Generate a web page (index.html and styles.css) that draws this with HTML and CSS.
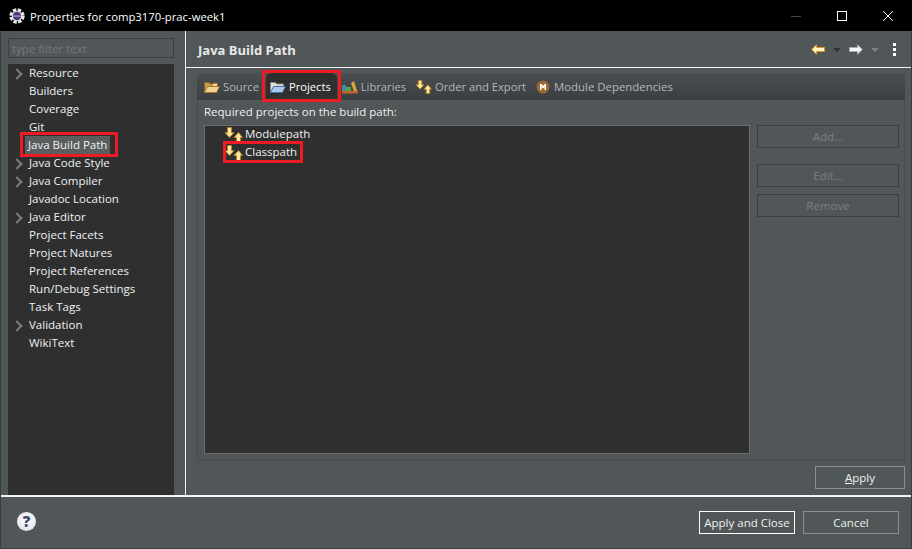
FILE: index.html
```html
<!DOCTYPE html>
<html lang="en">

<head>
  <meta charset="UTF-8" />
  <title>Properties for comp3170-prac-week1</title>
  <link rel="stylesheet" href="styles.css">
</head>

<body>
  <svg class="defs" width="0" height="0">
    <defs>
      <symbol id="arrows" viewBox="0 0 18 16">
        <path d="M2.500 .5h4v5h2.500l-4.500 5-4.500-5h2.500z" fill="#fbe6a8" stroke="#b8801c" />
        <path d="M11.500 15.500v-5H9l4.500-5 4 5h-2v5z" fill="#fbe6a8" stroke="#b8801c" />
      </symbol>
      <symbol id="folder" viewBox="0 0 16 14">
        <path d="M.5 12.500v-10h5l1 1.500h2l1-1h4v4" fill="#c99a52" stroke="#8a6228" />
        <path d="M9 4h4v3H9z" fill="#f0dca8" />
        <path d="M.5 12.500l3-6h12l-3 6z" fill="#f2d592" stroke="#a9762c" />
      </symbol>
      <symbol id="folder-open" viewBox="0 0 16 14">
        <path d="M.5 12.500v-10h5l1 1.500h7v3" fill="#e8e4d4" stroke="#8a8a80" />
        <path d="M.5 12.500l3-6h12l-3 6z" fill="#a9c8ea" stroke="#3f6ea8" />
      </symbol>
    </defs>
  </svg>

  <div class="window">
    <div class="titlebar">
      <svg class="app-icon" width="16" height="16" viewBox="0 0 16 16">
        <circle cx="8" cy="8" r="6.200" fill="none" stroke="#e8e6ee" stroke-width="3" stroke-dasharray="3.400 1.470" />
        <circle cx="8" cy="8" r="5.300" fill="#e8e6ee" />
        <circle cx="8" cy="8" r="4.200" fill="#4b3a78" />
        <path d="M3.800 7.500h8.400v1.200H3.800z" fill="#a9a0c8" />
      </svg>
      <span class="title">Properties for comp3170-prac-week1</span>
      <div class="win-controls">
        <span class="win-btn"><svg width="10" height="10"><path d="M0 5.500h10" stroke="#444" /></svg></span>
        <span class="win-btn"><svg width="10" height="10"><rect x=".5" y=".5" width="9" height="9" fill="none" stroke="#fff" /></svg></span>
        <span class="win-btn"><svg width="10" height="10"><path d="M0 0l10 10M10 0L0 10" stroke="#fff" /></svg></span>
      </div>
    </div>

    <div class="main">
      <aside class="sidebar">
        <input class="filter" type="text" placeholder="type filter text" />
        <ul class="nav">
          <li class="has-kids">Resource</li>
          <li>Builders</li>
          <li>Coverage</li>
          <li>Git</li>
          <li class="selected"><span>Java Build Path</span></li>
          <li class="has-kids">Java Code Style</li>
          <li class="has-kids">Java Compiler</li>
          <li>Javadoc Location</li>
          <li class="has-kids">Java Editor</li>
          <li>Project Facets</li>
          <li>Project Natures</li>
          <li>Project References</li>
          <li>Run/Debug Settings</li>
          <li>Task Tags</li>
          <li class="has-kids">Validation</li>
          <li>WikiText</li>
        </ul>
      </aside>

      <section class="content">
        <header class="page-head">
          <h1>Java Build Path</h1>
          <div class="head-tools">
            <svg width="14" height="11" viewBox="0 0 14 11"><path d="M.8 5.500L5.500.7v2.800h8v4h-8v2.800z" fill="#fff3c4" stroke="#e09a1e" /></svg>
            <i class="caret"></i>
            <svg width="14" height="11" viewBox="0 0 14 11"><path d="M13.200 5.500L8.500.7v2.800h-8v4h8v2.800z" fill="#f6f6f6" stroke="#a8acae" /></svg>
            <i class="caret off"></i>
            <span class="dots"><b></b><b></b><b></b></span>
          </div>
        </header>

        <div class="page-body">
          <div class="tab-panel">
            <div class="tabs">
              <div class="tab">
                <svg width="16" height="14"><use href="#folder" /></svg>Source
              </div>
              <div class="tab active">
                <svg width="16" height="14"><use href="#folder-open" /></svg>Projects
              </div>
              <div class="tab">
                <svg width="16" height="14" viewBox="0 0 16 14">
                  <path d="M0 5h4v7H0z" fill="#3c8f9a" />
                  <path d="M4 7h5v5H4z" fill="#5aa04a" />
                  <path d="M9 3l3-2 3.500 11H12z" fill="#d8a23a" />
                  <path d="M0 11h16v2.500H0z" fill="#c0622a" />
                </svg>Libraries
              </div>
              <div class="tab">
                <svg width="16" height="14"><use href="#arrows" /></svg>Order and Export
              </div>
              <div class="tab module">
                <svg width="14" height="14" viewBox="0 0 14 14">
                  <circle cx="7" cy="7" r="6.500" fill="#9a6a32" />
                  <path d="M4 10V4h1.500L7 6l1.500-2H10v6H8.500V7L7 8.500 5.500 7v3z" fill="#fff" />
                </svg>Module Dependencies
              </div>
            </div>

            <p class="req-label">Required projects on the build path:</p>

            <div class="req-row">
              <ul class="req-tree">
                <li><svg width="18" height="16"><use href="#arrows" /></svg>Modulepath</li>
                <li class="marked"><svg width="18" height="16"><use href="#arrows" /></svg>Classpath</li>
              </ul>
              <div class="side-btns">
                <button disabled>Add...</button>
                <button class="gap" disabled>Edit...</button>
                <button disabled>Remove</button>
              </div>
            </div>
          </div>

          <div class="apply-row">
            <button class="btn"><u>A</u>pply</button>
          </div>
        </div>
      </section>
    </div>

    <footer class="footer">
      <span class="help">?</span>
      <div class="footer-btns">
        <button class="btn primary">Apply and Close</button>
        <button class="btn">Cancel</button>
      </div>
    </footer>
  </div>
</body>

</html>
```

FILE: styles.css
```css
* {
  box-sizing: border-box;
  margin: 0;
  padding: 0;
}

body {
  width: 912px;
  height: 549px;
  overflow: hidden;
  background: #3a3d3f;
  color: #eef1f2;
  font-family: "Open Sans", "Noto Sans", sans-serif;
  font-size: 11.5px;
}

.defs {
  display: block;
  height: 0;
}

button,
input {
  font: inherit;
}

.window {
  display: flex;
  flex-direction: column;
  height: 548px;
  margin: 0 1px;
  background: #515658;
}

.titlebar {
  display: flex;
  align-items: center;
  flex: 0 0 31px;
  margin: 0 -1px;
  padding: 0 1px 0 9px;
  background: #000;
  color: #fff;
}

.app-icon {
  margin-right: 5px;
}

.title {
  flex: 1;
  padding-top: 1px;
  font-size: 11.300px;
}

.win-controls {
  display: flex;
}

.win-btn {
  display: flex;
  justify-content: center;
  align-items: center;
  width: 46px;
  height: 31px;
}

.main {
  display: flex;
  flex: 0 0 466px;
  border-bottom: 2px solid #f2f2f2;
}

.sidebar {
  display: flex;
  flex-direction: column;
  flex: 0 0 185px;
  padding: 7px 11px 0 7px;
  border-right: 1px solid #f2f2f2;
}

.filter {
  height: 20px;
  padding: 0 3px;
  border: 1px solid #3c3f41;
  background: #515658;
  color: #fff;
}

.filter::placeholder {
  color: #747879;
  opacity: 1;
}

.nav {
  flex: 1;
  margin-top: 6px;
  list-style: none;
  background: #2f2f2f;
}

.nav li {
  position: relative;
  height: 18px;
  padding-left: 21px;
  line-height: 18px;
}

.has-kids::before {
  content: "";
  position: absolute;
  left: 5px;
  top: 6px;
  width: 6px;
  height: 6px;
  border-top: 2px solid #7a7c7e;
  border-right: 2px solid #7a7c7e;
  transform: rotate(45deg);
}

.nav .selected {
  padding-left: 17px;
}

.selected span {
  position: relative;
  display: inline-block;
  padding: 0 3px;
  background: #5a5e5e;
}

/* red annotation boxes from the screenshot */
.selected span::after,
.tab.active::after,
.marked::after {
  content: "";
  position: absolute;
  border: 3px solid #ed1c24;
}

.selected span::after {
  left: -5px;
  right: -8px;
  top: -4px;
  bottom: -3px;
}

.content {
  display: flex;
  flex-direction: column;
  flex: 1;
}

.page-head {
  display: flex;
  justify-content: space-between;
  align-items: center;
  flex: 0 0 37px;
  padding: 1px 15px 0 12px;
  border-bottom: 1px solid #f2f2f2;
}

.page-head h1 {
  font-size: 13px;
  font-weight: 700;
  color: #e8e8e8;
}

.head-tools {
  display: flex;
  align-items: center;
  gap: 8px;
}

.caret {
  width: 0;
  height: 0;
  border-left: 4px solid transparent;
  border-right: 4px solid transparent;
  border-top: 4px solid #2f3133;
}

.caret.off {
  margin-right: 6px;
  border-top-color: #7c8082;
}

.dots {
  display: flex;
  flex-direction: column;
  gap: 2px;
}

.dots b {
  width: 3px;
  height: 3px;
  background: #fff;
}

.page-body {
  flex: 1;
  padding: 5px 6px 0 11px;
}

.tab-panel {
  height: 387px;
  border: solid #484c4e;
  border-width: 0 1px 1px 1px;
}

.tabs {
  display: flex;
  height: 27px;
  margin: 0 -1px;
  padding-left: 2px;
  border-radius: 6px 0 0 0;
  background: linear-gradient(#4a4e50, #3c3f41);
  color: #b4b8ba;
  font-size: 11.200px;
}

.tab {
  position: relative;
  display: flex;
  align-items: center;
  gap: 3px;
  padding: 0 5px;
  white-space: nowrap;
}

.tab.active {
  margin-left: 2px;
  padding: 0 6px 0 4px;
  border-radius: 6px 6px 0 0;
  background: #2f2f2f;
  color: #fff;
}

.tab.module {
  gap: 4px;
  font-size: 11.400px;
}

.tab.active::after {
  left: -4px;
  right: -4px;
  top: -3px;
  bottom: -2px;
}

.req-label {
  margin: 3px 0 5px 6px;
  line-height: 17px;
}

.req-row {
  display: flex;
  gap: 7px;
  padding-left: 6px;
}

.req-tree {
  flex: 0 0 546px;
  height: 329px;
  list-style: none;
  border: 1px solid #6a6e70;
  background: #2f2f2f;
}

.req-tree li {
  position: relative;
  display: flex;
  align-items: center;
  gap: 2px;
  width: max-content;
  height: 18px;
  margin-left: 20px;
  padding-bottom: 3px;
}

.req-tree svg {
  margin-top: 2px;
}

.marked::after {
  left: -2px;
  right: -6px;
  top: -3px;
  bottom: -1px;
}

.side-btns {
  display: flex;
  flex-direction: column;
  gap: 7px;
}

.side-btns button {
  width: 142px;
  height: 23px;
  border: 1px solid #3c3f41;
  background: #515658;
  color: #7c8082;
}

.side-btns .gap {
  margin-top: 9px;
}

.btn {
  width: 90px;
  height: 23px;
  border: 1px solid #8b8e90;
  background: #515658;
  color: #eef1f2;
}

.apply-row {
  display: flex;
  justify-content: flex-end;
  margin-top: 6px;
}

.footer {
  display: flex;
  justify-content: space-between;
  align-items: center;
  flex: 1;
  padding: 0 12px 0 16px;
}

.help {
  width: 19px;
  height: 19px;
  margin-top: -2px;
  border-radius: 50%;
  background: radial-gradient(circle at 50% 40%, #fff, #d9dde6);
  color: #3e4a6e;
  font-size: 15px;
  font-weight: 800;
  line-height: 19px;
  text-align: center;
}

.footer-btns {
  display: flex;
  gap: 8px;
}

.footer-btns .btn {
  width: 96px;
}

.footer-btns .primary {
  border-color: #fff;
}
```
